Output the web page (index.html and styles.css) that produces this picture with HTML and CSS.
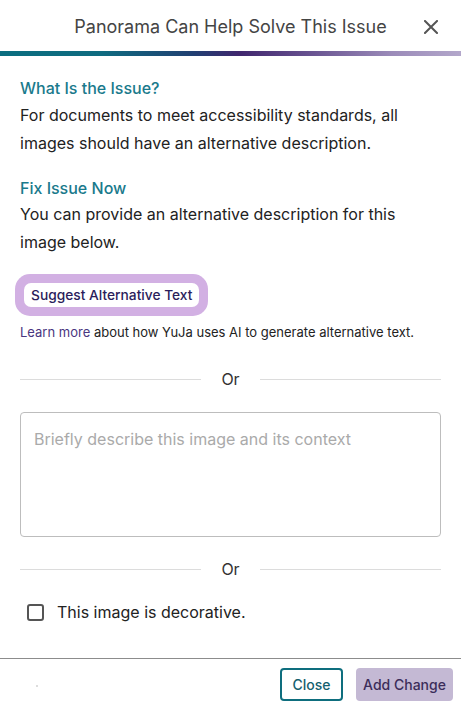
FILE: index.html
```html
<!DOCTYPE html>
<html lang="en">
<head>
<meta charset="utf-8">
<title>Panorama Can Help Solve This Issue</title>
<link rel="stylesheet" href="styles.css">
</head>
<body>
<div class="dialog">
  <header class="header">
    <span></span>
    <h1 class="title">Panorama Can Help Solve This Issue</h1>
    <button class="close-x" aria-label="Close">
      <svg width="14" height="14" viewBox="0 0 14 14"><path d="M1 1 L13 13 M13 1 L1 13" stroke="#555" stroke-width="2" stroke-linecap="square"/></svg>
    </button>
  </header>
  <div class="bar"></div>
  <main class="content">
    <h2 class="heading">What Is the Issue?</h2>
    <p class="text">For documents to meet accessibility standards, all images should have an alternative description.</p>
    <h2 class="heading heading-2">Fix Issue Now</h2>
    <p class="text">You can provide an alternative description for this image below.</p>
    <div class="suggest-ring">
      <button class="suggest">Suggest Alternative Text</button>
    </div>
    <p class="learn"><a class="learn-link">Learn more</a> about how YuJa uses AI to generate alternative text.</p>
    <div class="or"><span class="line"></span><span class="or-text">Or</span><span class="line"></span></div>
    <textarea class="desc" placeholder="Briefly describe this image and its context"></textarea>
    <div class="or or-2"><span class="line"></span><span class="or-text">Or</span><span class="line"></span></div>
    <label class="check"><span class="box"></span><span>This image is decorative.</span></label>
  </main>
  <footer class="footer">
    <span class="dot"></span>
    <div class="actions">
      <button class="btn btn-close">Close</button>
      <button class="btn btn-add">Add Change</button>
    </div>
  </footer>
</div>
</body>
</html>
```
FILE: styles.css
```css
* { box-sizing: border-box; }
html, body { margin: 0; padding: 0; background: #fff; }
body { font-family: Inter, "Noto Sans", sans-serif; color: #222; width: 461px; height: 709px; overflow: hidden; }
.dialog { width: 461px; height: 709px; display: flex; flex-direction: column; }
.header { height: 51px; display: grid; grid-template-columns: 1fr auto 1fr; align-items: center; }
.title { margin: 0; font-size: 18px; font-weight: 400; color: #444; line-height: 24px; padding-top: 3px; }
.close-x { justify-self: end; margin-right: 23px; border: 0; background: none; padding: 0; width: 14px; height: 14px; display: flex; margin-top: 3px; }
.bar { height: 5px; background: linear-gradient(90deg, #0b6e80 0%, #0f6b80 22%, #213f72 42%, #40266e 52%, #6a5592 68%, #9b8bb9 85%, #b3a7cb 100%); }
.content { flex: 1; padding: 18px 20px 0; }
.heading { margin: 0; font-size: 16px; font-weight: 500; color: #1a7a8c; line-height: 28px; }
.heading-2 { margin-top: 18px; line-height: 26px; }
.text { margin: 0; font-size: 16px; line-height: 27.5px; color: #222; }
.suggest-ring { display: inline-flex; margin: 18px 0 0 -5px; padding: 9px; background: #d2b0e3; border-radius: 15px; }
.suggest { border: 0; background: #fff; border-radius: 7px; padding: 0 7px; height: 24px; font-family: inherit; font-size: 13.75px; font-weight: 500; color: #2b1d5b; white-space: nowrap; }
.learn { margin: 6px 0 0; font-size: 13px; line-height: 20px; color: #222; white-space: nowrap; }
.learn-link { color: #4a3680; }
.or { display: flex; align-items: center; gap: 10px; margin-top: 28px; height: 18px; }
.or .line { flex: 1; height: 1px; background: #dcdcdc; }
.or-text { font-size: 16px; color: #333; padding: 0 10px; line-height: 18px; }
.desc { display: block; width: 100%; height: 125px; margin-top: 24px; border: 1px solid #bdbdbd; border-radius: 4px; padding: 12px 13px; font-family: inherit; font-size: 16px; line-height: 28px; resize: none; color: #222; }
.desc::placeholder { color: #aaa; }
.or-2 { margin-top: 23px; }
.check { display: flex; align-items: center; gap: 13px; margin: 25px 0 0 7px; font-size: 16px; color: #222; line-height: 18px; }
.box { width: 17px; height: 17px; border: 2px solid #555; border-radius: 3px; }
.footer { height: 51px; border-top: 1px solid #8c8c8c; display: flex; align-items: center; justify-content: space-between; padding: 0 8px 0 36px; }
.dot { width: 2px; height: 2px; background: #ddd; margin-top: 4px; }
.actions { display: flex; gap: 13px; }
.btn { height: 33px; border-radius: 4px; font-family: inherit; font-size: 14px; font-weight: 500; padding: 0; white-space: nowrap; }
.btn-close { border: 2px solid #0e6e7e; background: #fff; color: #155f6e; width: 63px; }
.btn-add { border: 0; background: #c4b9d4; color: #3c2d5a; width: 97px; }
```
